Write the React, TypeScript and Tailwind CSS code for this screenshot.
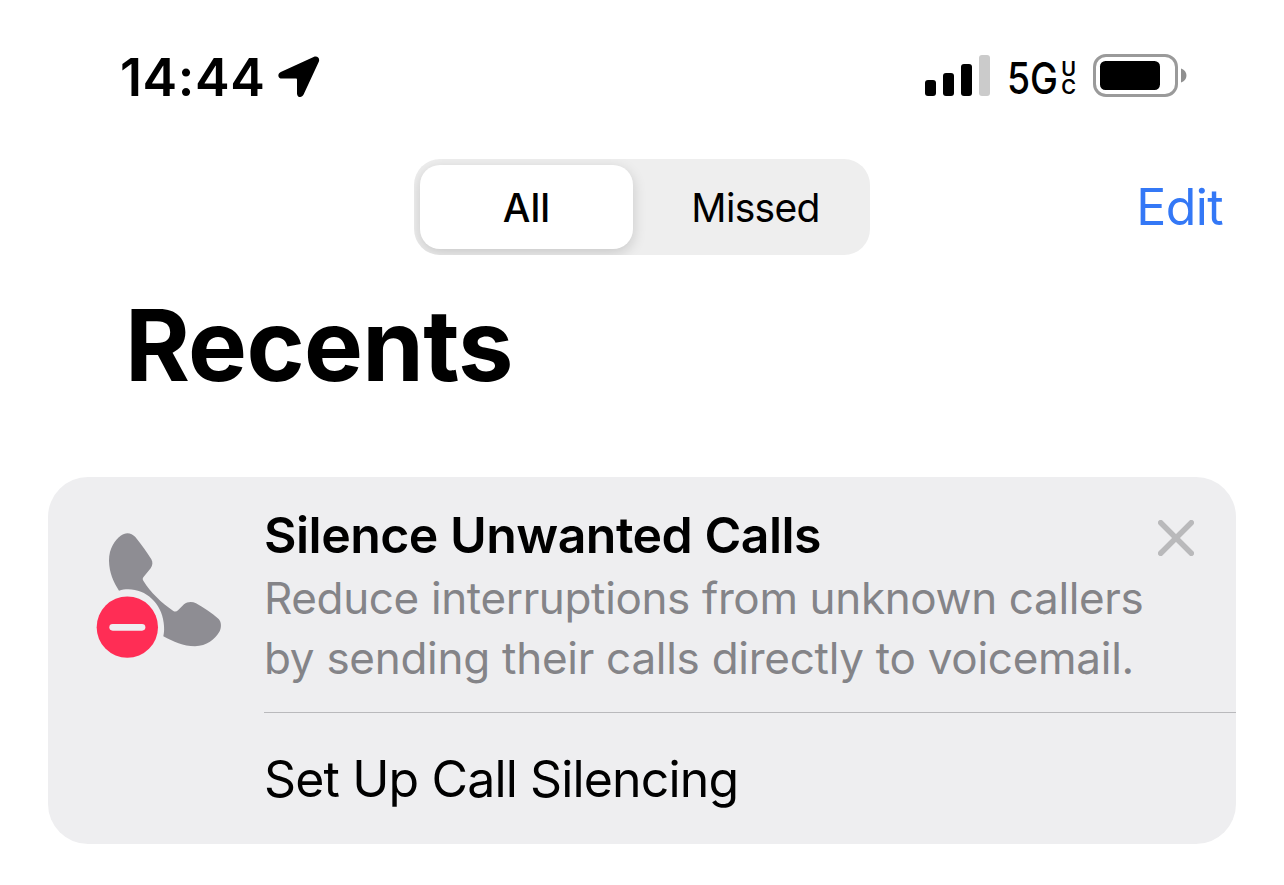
import { useState } from 'react';

type Filter = 'all' | 'missed';

function LocationArrow() {
  return (
    <svg className="ml-[13px] h-[42px] w-[42px]" viewBox="0 0 42 42" fill="#000">
      <path d="M35.6 1 C39.2 -0.4 42.2 2 40.8 5.8 L25.6 38.6 C23.9 42.4 19 41.6 19 37.4 V23.4 C19 22.9 18.6 22.6 18.2 22.6 H4 C-0.2 22.6 -1 17.8 2.8 16 Z" />
    </svg>
  );
}

function Signal() {
  return (
    <div className="flex items-end gap-[7px]">
      <div className="h-4 w-[11px] rounded-[3px] bg-black" />
      <div className="h-[23px] w-[11px] rounded-[3px] bg-black" />
      <div className="h-8 w-[11px] rounded-[3px] bg-black" />
      <div className="h-[41px] w-[11px] rounded-[3px] bg-[#cbcbcb]" />
    </div>
  );
}

function Battery() {
  return (
    <svg className="h-[43px] w-[94px]" viewBox="0 0 94 43" fill="none">
      <rect x="1.5" y="1.5" width="82" height="40" rx="11.5" stroke="#9a9a9a" strokeWidth="3" />
      <rect x="7" y="7" width="60" height="29" rx="5.5" fill="#000" />
      <path d="M88 14.5 C91 15.5 93.4 18 93.4 21.5 C93.4 25 91 27.5 88 28.5 Z" fill="#8f8f8f" />
    </svg>
  );
}

function SilencedPhone() {
  return (
    <svg className="h-[150px] w-[160px]" viewBox="0 0 480 450" fill="none">
      <path
        d="M117 212 C100 184 88 160 87 122 C87 84 105 60 122 47 C136 36 154 37 166 51 C185 75 200 95 214 118 C219 127 218 136 212 145 L190 172 C187 176 188 180 191 184 C210 215 245 250 280 273 C285 276 290 275 294 271 L312 253 C322 245 336 244 348 250 C372 263 395 279 416 297 C424 305 425 322 419 334 C405 358 380 378 345 379 C310 379 280 365 250 349 C253 336 253 322 251 308 C244 250 198 208 145 208 C135 208 126 209 117 212 Z"
        fill="#8e8d93"
      />
      <circle cx="142" cy="321.500" r="92" fill="#ff2d55" />
      <rect x="88" y="312" width="108" height="20" rx="10" fill="#eeeef0" />
    </svg>
  );
}

export default function App() {
  const [filter, setFilter] = useState<Filter>('all');
  const [showTip, setShowTip] = useState(true);

  const tabClass = 'flex h-[84px] shrink-0 items-center justify-center rounded-[20px] text-[39px] leading-none';
  const activeClass = 'bg-white font-medium shadow-[0_4px_14px_rgba(0,0,0,0.16)]';

  return (
    <div className="h-[885px] w-[1284px] overflow-hidden bg-white font-['Inter',sans-serif] text-black">
      {/* Status bar */}
      <div className="flex h-[154px] items-center justify-between pr-[97px] pl-[120px]">
        <div className="flex items-center">
          <span className="pt-0.5 text-[52px] leading-none font-semibold tracking-[0.6px]">14:44</span>
          <LocationArrow />
        </div>
        <div className="flex items-center pb-[3px]">
          <Signal />
          <div className="ml-[17px] flex items-center pt-1">
            <span className="w-[53px] text-[44px] leading-none font-medium whitespace-nowrap">
              <span className="inline-block origin-left scale-x-[0.85]">5G</span>
            </span>
            <span className="flex w-[17px] flex-col text-center text-[20px] leading-[18px] font-semibold">
              <span>U</span>
              <span>C</span>
            </span>
          </div>
          <div className="ml-4">
            <Battery />
          </div>
        </div>
      </div>

      {/* Filter + edit */}
      <div className="mt-[5px] grid grid-cols-[414px_456px_1fr] items-center">
        <div />
        <div className="flex h-24 items-center overflow-hidden rounded-[26px] bg-[#eeeeee] p-1.5">
          <button
            type="button"
            onClick={() => setFilter('all')}
            className={`${tabClass} w-[213px] ${filter === 'all' ? activeClass : ''}`}
          >
            All
          </button>
          <button
            type="button"
            onClick={() => setFilter('missed')}
            className={`${tabClass} ml-3 w-[221px] tracking-[-0.7px] ${filter === 'missed' ? activeClass : ''}`}
          >
            Missed
          </button>
        </div>
        <button type="button" className="pr-[61px] text-right text-[50px] leading-none tracking-[-0.6px] text-[#3478f6]">
          Edit
        </button>
      </div>

      <h1 className="mt-[30px] pl-[125px] text-[99px] leading-[120px] font-bold tracking-[-0.7px]">Recents</h1>

      {/* Call silencing tip */}
      {showTip && (
        <section className="mx-12 mt-[72px] flex h-[367px] rounded-[40px] bg-[#eeeef0]">
          <div className="w-[216px] pt-[43px] pl-8">
            <SilencedPhone />
          </div>
          <div className="flex-1">
            <div className="h-[235px] pt-7 whitespace-nowrap">
              <h2 className="text-[50px] leading-[60px] font-semibold tracking-[-0.52px]">Silence Unwanted Calls</h2>
              <p className="mt-[3px] text-[44px] leading-[60px] text-[#848488]">
                <span className="block tracking-[-0.36px]">Reduce interruptions from unknown callers</span>
                <span className="block tracking-[-0.27px]">by sending their calls directly to voicemail.</span>
              </p>
            </div>
            <div className="h-px bg-[#b9b9bc]" />
            <button type="button" className="h-[131px] text-[50px] leading-none tracking-[-0.86px]">
              Set Up Call Silencing
            </button>
          </div>
          <button
            type="button"
            aria-label="Close"
            onClick={() => setShowTip(false)}
            className="-ml-[78px] mt-[43px] mr-[42px] h-9 w-9"
          >
            <svg className="h-9 w-9" viewBox="0 0 36 36" stroke="#b9b9bb" strokeWidth="5.500" strokeLinecap="round">
              <path d="M2.700 2.700 L33.300 33.300 M33.300 2.700 L2.700 33.300" />
            </svg>
          </button>
        </section>
      )}
    </div>
  );
}
